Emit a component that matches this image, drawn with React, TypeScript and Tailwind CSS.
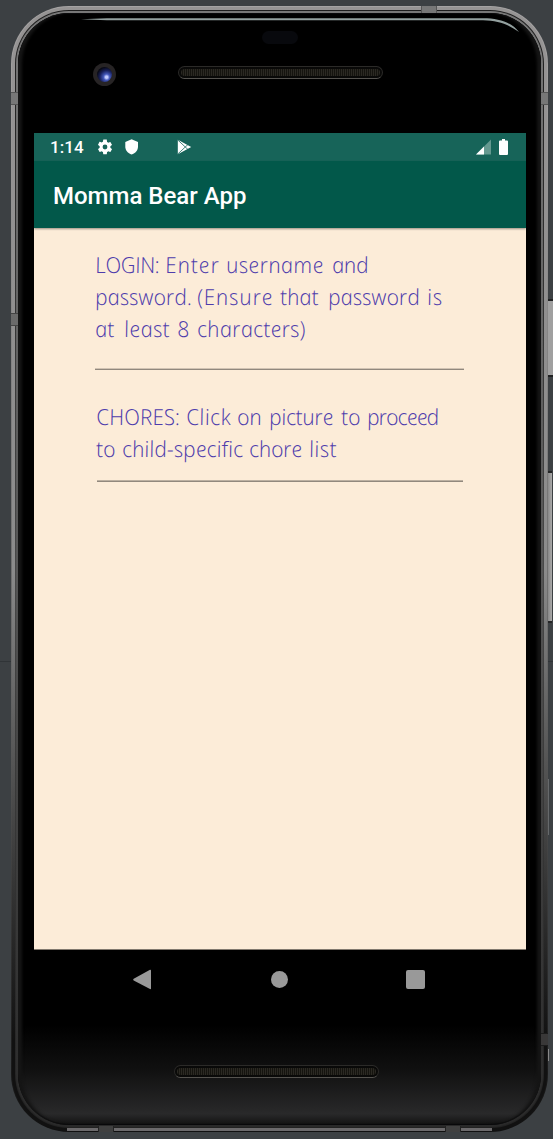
import React from "react";

function Speaker() {
  return (
    <div className="h-[13px] w-[205px] rounded-full border border-[#2b2a28] border-b-[#55534f] bg-[#090908] p-[2px]">
      <div className="h-full rounded-full bg-[repeating-linear-gradient(90deg,#2b2923_0_1px,#15140f_1px_2px)]" />
    </div>
  );
}

function StatusBar() {
  return (
    <div className="flex h-7 shrink-0 items-center justify-between bg-[#176459] pl-4 pr-[18px] text-white">
      <div className="flex items-center">
        <span className="w-[46px] whitespace-nowrap text-[17px] font-medium leading-7 tracking-[0.1px]">1:14</span>
        <div className="flex items-center gap-[11px]">
          <svg className="size-[18px]" viewBox="0 0 24 24" fill="currentColor">
            <path d="M19.14 12.94c.04-.3.06-.61.06-.94s-.02-.64-.07-.94l2.03-1.58a.49.49 0 0 0 .12-.61l-1.92-3.32a.49.49 0 0 0-.59-.22l-2.39.96a7 7 0 0 0-1.62-.94l-.36-2.54A.48.48 0 0 0 13.92 2h-3.84a.47.47 0 0 0-.47.41l-.36 2.54a7 7 0 0 0-1.62.94l-2.39-.96a.48.48 0 0 0-.59.22L2.74 8.87a.47.47 0 0 0 .12.61l2.03 1.58a6 6 0 0 0 0 1.88l-2.03 1.58a.49.49 0 0 0-.12.61l1.92 3.32c.12.22.37.29.59.22l2.39-.96c.5.38 1.03.7 1.62.94l.36 2.54c.05.24.24.41.48.41h3.84c.24 0 .44-.17.47-.41l.36-2.54a7 7 0 0 0 1.62-.94l2.39.96c.22.08.47 0 .59-.22l1.92-3.32a.47.47 0 0 0-.12-.61zM12 15.2a3.2 3.2 0 1 1 0-6.4 3.2 3.2 0 0 1 0 6.4z" />
          </svg>
          <svg className="h-[16px] w-[14px]" viewBox="0 0 14 16" fill="currentColor">
            <path d="M6.6.3 13 3v4.5c0 3.8-2.6 6.8-6.4 8C2.9 14.300.3 11.300.3 7.500V3z" />
          </svg>
          <svg className="ml-[27px] h-[16px] w-[15px]" viewBox="0 0 15 16">
            <path d="M.8.8 14.2 8 .8 15.2z" fill="white" />
            <path d="M1 1.2 11.5 11M1 14.8 11.5 5" stroke="#176459" strokeWidth="0.8" />
            <path d="m2 4.2 4 3.8-4 3.8z" fill="white" />
          </svg>
        </div>
      </div>
      <div className="flex items-center gap-2">
        <svg className="h-[16px] w-[15px]" viewBox="0 0 15 16">
          <path d="M0 15.500 15 .5v15z" fill="#659990" />
          <path d="M0 15.500 8 7.500v8z" fill="white" />
        </svg>
        <svg className="h-[17px] w-[9px]" viewBox="0 0 9 17" fill="currentColor">
          <path d="M3 0h3v1.400h2q1 0 1 1V15q0 1-1 1H1q-1 0-1-1V2.400q0-1 1-1h2z" />
        </svg>
      </div>
    </div>
  );
}

type Word = { text: React.ReactNode; width: string };

function Line({ words }: { words: Word[] }) {
  return (
    <div className="flex h-8 whitespace-pre">
      {words.map((w, i) => (
        <span key={i} className={`inline-block shrink-0 origin-[0_75%] skew-x-[11deg] ${w.width}`}>
          {w.text}{" "}
        </span>
      ))}
    </div>
  );
}

const loginLines: Word[][] = [
  [
    { text: "LOGIN:", width: "w-[70px] tracking-[-0.5px]" },
    { text: "Enter", width: "w-[61px] tracking-[0.9px]" },
    { text: "username", width: "w-[106px] tracking-[0.3px]" },
    { text: "and", width: "w-[40px] tracking-[-0.3px]" },
  ],
  [
    { text: "password.", width: "w-[102px]" },
    { text: "(Ensure", width: "w-[83px] tracking-[0.8px]" },
    { text: "that", width: "w-[48px]" },
    { text: "password", width: "w-[99px]" },
    { text: "is", width: "w-[20px] tracking-[0.8px]" },
  ],
  [
    { text: "at", width: "w-[29px]" },
    { text: "least", width: "w-[53px] tracking-[0.3px]" },
    { text: "8", width: "w-[20px]" },
    { text: "characters)", width: "w-[120px] tracking-[0.2px]" },
  ],
];

const choreLines: Word[][] = [
  [
    { text: "CHORES:", width: "w-[90px]" },
    { text: "Click", width: "w-[51px] tracking-[0.4px]" },
    { text: "on", width: "w-[32px]" },
    { text: "picture", width: "w-[72px] tracking-[-0.3px]" },
    { text: "to", width: "w-[26px]" },
    { text: "proceed", width: "w-[80px] tracking-[-0.9px]" },
  ],
  [
    { text: "to", width: "w-[26px]" },
    {
      text: (
        <>
          child-speci<span className="inline-block -skew-x-[11deg] not-italic">f</span>ic
        </>
      ),
      width: "w-[127px]",
    },
    { text: "chore", width: "w-[60px] tracking-[-0.2px]" },
    { text: "list", width: "w-[32px] tracking-[0.4px]" },
  ],
];

function Screen() {
  return (
    <div className="flex h-[817px] flex-col bg-[#fcecd8]">
      <StatusBar />
      <header className="z-10 flex h-[67px] shrink-0 items-center bg-[#02584a] pl-[19px] pt-[3px] shadow-[0_1px_2px_#0006]">
        <h1 className="whitespace-nowrap text-[24px] font-medium leading-8 text-white">Momma Bear App</h1>
      </header>
      <main className="flex-1 border-b border-[#81796e] pl-[61px] font-['Coming_Soon','Open_Sans',sans-serif] text-[22px] font-light italic leading-8 text-[#4e3cac]">
        <section className="flex h-[142px] w-[369px] flex-col justify-between border-b border-[#91887d] pl-px pt-5">
          <div>
            {loginLines.map((words, i) => (
              <Line key={i} words={words} />
            ))}
          </div>
          <div className="-ml-px h-px bg-[#91887d]/40" />
        </section>
        <section className="ml-[2px] flex h-[112px] w-[366px] flex-col justify-between border-b border-[#91887d] pt-[30px]">
          <div>
            {choreLines.map((words, i) => (
              <Line key={i} words={words} />
            ))}
          </div>
          <div className="h-px bg-[#91887d]/60" />
        </section>
      </main>
    </div>
  );
}

export default function App() {
  return (
    <div className="relative h-[1139px] w-[553px] overflow-hidden bg-[#3c4043] px-[11px] pt-[6px] font-['Roboto',sans-serif] antialiased">
      <div className="absolute left-0 top-[661px] h-px w-full bg-[#303437]" />
      <div className="absolute left-[547px] top-[299px] h-[78px] w-[8px] border-y-2 border-[#202122] bg-[#a0a0a0]" />
      <div className="absolute left-[546px] top-[471px] h-[152px] w-[6px] border-y-2 border-[#242526] bg-linear-to-r from-[#777] to-[#aaa]" />
      <div className="absolute left-[547px] top-[779px] h-[56px] w-[2px] bg-[#66696b]" />
      <div className="absolute left-[547px] top-[1049px] h-[12px] w-[2px] bg-[#888]" />

      <div className="relative h-[1126px] w-[537px] rounded-[58px] bg-linear-to-b from-[#a5a3a3] via-[#666] via-60% to-[#101010] p-px">
        <div className="h-full rounded-[57px] bg-linear-to-b from-[#969494] via-[#8b8b8b] via-50% to-[#111] to-92% p-[3px]">
          <div className="h-full rounded-[54px] bg-linear-to-b from-[#1d1d1d] via-[#484848] via-50% to-[#222] p-px">
            <div className="h-full rounded-[53px] bg-linear-to-b from-[#777] via-[#555] via-50% to-[#292929] p-[2px]">
              <div className="flex h-full flex-col rounded-[51px] bg-[linear-gradient(to_bottom,#000_0%,#000_91%,#101010_95%,#29292a_99%,#111_100%)] pl-[16px] pr-[15px] shadow-[inset_5px_0_3px_-1px_#151515,inset_-5px_0_3px_-1px_#151515,inset_0_0_0_1px_#08080a]">
                <div className="flex h-[120px] flex-col items-center pt-[18px]">
                  <div className="h-[13px] w-[36px] rounded-full bg-[#08090d]" />
                  <div className="mt-[19px] flex w-full items-center gap-[62px] pl-[59px]">
                    <div className="flex size-[23px] items-center justify-center rounded-full bg-[#272425]">
                      <div className="size-[15px] rounded-full bg-[radial-gradient(circle_at_64%_68%,#c3ccff_0_8%,#4358ba_22%,#18205a_48%,#080914_72%)]" />
                    </div>
                    <div className="-mt-1">
                      <Speaker />
                    </div>
                  </div>
                </div>
                <Screen />
                <nav className="flex h-[58px] items-center justify-between pl-[99px] pr-[101px]">
                  <svg className="h-[21px] w-[18px]" viewBox="0 0 18 21" fill="#999">
                    <path d="M17 .7q1-.3 1 .8v18q0 1-1 .6L.7 11.4q-1-.8 0-1.6z" />
                  </svg>
                  <div className="ml-[1px] size-[17px] rounded-full bg-[#999]" />
                  <div className="size-[19px] rounded-[2px] bg-[#999]" />
                </nav>
                <div className="flex justify-center pr-[7px] pt-[57px]">
                  <Speaker />
                </div>
              </div>
            </div>
          </div>
        </div>

        {/* Antenna bands and edge highlights over the metal rim */}
        <div className="absolute inset-x-[56px] bottom-[1px] h-[3px] bg-[#6c6a6c]" />
        <div className="absolute left-0 top-[86px] h-[13px] w-[7px] border-y border-[#555] bg-[#777]" />
        <div className="absolute right-0 top-[86px] h-[13px] w-[7px] border-y border-[#555] bg-[#777]" />
        <div className="absolute left-0 top-[307px] h-[13px] w-[7px] border-y border-[#444] bg-[#6a6a6a]" />
        <div className="absolute right-0 top-[1027px] h-[13px] w-[7px] border-y border-[#1c1c1c] bg-[#393838]" />
        <div className="absolute left-[410px] top-0 h-[7px] w-[16px] border-x border-[#555] bg-[#777]" />
        <div className="absolute bottom-0 left-[87px] h-[6px] w-[16px] border-x border-[#222] bg-[#404040]" />
        <div className="absolute bottom-0 left-[434px] h-[6px] w-[16px] border-x border-[#222] bg-[#404040]" />
        <svg className="absolute left-[70px] top-[11px] h-[18px] w-[440px]" viewBox="0 0 440 18">
          <path d="M0 2.200 26 1.200H402C418 1.200 430 5 438 15C427 7 417 3.500 402 3.200H26z" fill="#93a09f" />
        </svg>
      </div>
    </div>
  );
}
